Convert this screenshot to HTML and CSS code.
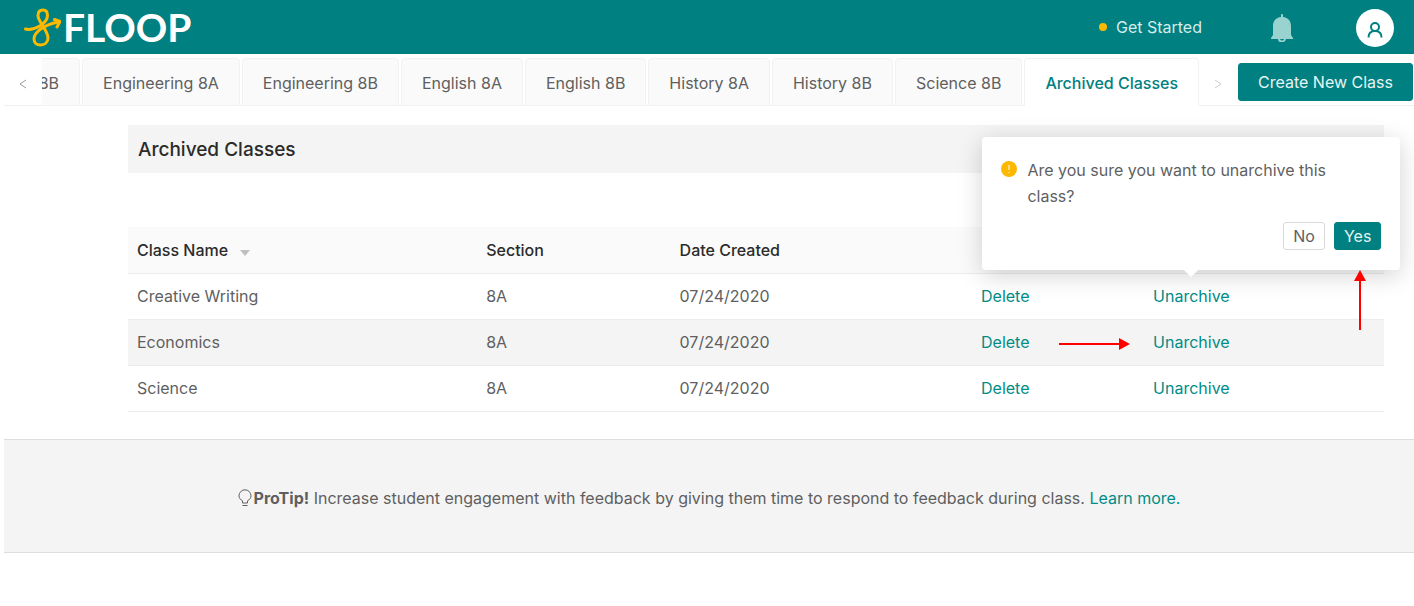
FILE: index.html
```
<!DOCTYPE html>
<html lang="en">
<head>
    <meta charset="UTF-8">
    <title>Floop - Archived Classes</title>
    <link rel="stylesheet" href="styles.css">
</head>
<body>
    <header class="header">
        <a class="logo" href="#">
            <svg class="logo-mark" viewBox="0 0 37 40" width="37" height="40" aria-hidden="true">
                <path d="M1.500 22C9 24 23.500 17 23.500 8.500C23.500 5 22 3 19 3C16 3 14 5 14 8.500C14 15 24 23 24 31C24 35 21 38 16.500 38C12.500 38 10 35.500 10 32C10 25 20 18 34 15" />
                <path d="M30.500 12.500L36 14.500L33 20" />
            </svg>
            <span class="logo-text">FLOOP</span>
        </a>
        <nav class="header-nav">
            <a class="get-started" href="#"><span class="dot"></span>Get Started</a>
            <button class="icon-button" type="button" aria-label="Notifications">
                <svg viewBox="0 0 22 28" width="22" height="28">
                    <path class="bell" d="M11 0C11.700 0 12 .5 12 1V3C17 3.500 20 7 20 12V21L22 24V25H0V24L2 21V12C2 7 5 3.500 10 3V1C10 .5 10.300 0 11 0Z" />
                    <path class="bell-clapper" d="M8 24.500a3 3 0 0 0 6 0" />
                </svg>
            </button>
            <button class="avatar" type="button" aria-label="Account">
                <svg viewBox="0 0 16 18" width="16" height="18">
                    <circle cx="8" cy="6" r="4" />
                    <path d="M1.500 16.500C1.500 12.500 4 10 8 10S14.500 12.500 14.500 16.500" />
                </svg>
            </button>
        </nav>
    </header>

    <div class="tab-bar">
        <button class="tab-arrow" type="button" aria-label="Previous tabs">
            <svg viewBox="0 0 8 10" width="8" height="10"><path d="M7 1L1 5L7 9" /></svg>
        </button>
        <nav class="tabs">
            <a class="tab" href="#">8B</a>
            <a class="tab" href="#">Engineering 8A</a>
            <a class="tab" href="#">Engineering 8B</a>
            <a class="tab" href="#">English 8A</a>
            <a class="tab" href="#">English 8B</a>
            <a class="tab" href="#">History 8A</a>
            <a class="tab" href="#">History 8B</a>
            <a class="tab" href="#">Science 8B</a>
            <a class="tab tab-active" href="#">Archived Classes</a>
        </nav>
        <button class="tab-arrow tab-arrow-disabled" type="button" aria-label="Next tabs">
            <svg viewBox="0 0 8 10" width="8" height="10"><path d="M1 1L7 5L1 9" /></svg>
        </button>
        <button class="button button-primary create-class" type="button">Create New Class</button>
    </div>

    <main class="content">
        <h1 class="title">Archived Classes</h1>

        <table class="classes">
            <thead>
                <tr>
                    <th class="col-name">Class Name
                        <svg class="sort" viewBox="0 0 10 6" width="10" height="6" aria-hidden="true"><path d="M0 0H10L5 6Z" /></svg>
                    </th>
                    <th class="col-section">Section</th>
                    <th class="col-date">Date Created</th>
                    <th class="col-delete"></th>
                    <th class="col-unarchive"></th>
                </tr>
            </thead>
            <tbody>
                <tr>
                    <td>Creative Writing</td>
                    <td>8A</td>
                    <td>07/24/2020</td>
                    <td><a href="#">Delete</a></td>
                    <td>
                        <div class="action">
                            <a href="#">Unarchive</a>
                            <div class="popover" role="dialog">
                                <div class="popover-message">
                                    <svg viewBox="0 0 16 16" width="16" height="16" aria-hidden="true">
                                        <circle class="warning" cx="8" cy="8" r="8" />
                                        <path class="warning-mark" d="M8 4V9M8 11V12" />
                                    </svg>
                                    <p>Are you sure you want to unarchive this class?</p>
                                </div>
                                <div class="popover-buttons">
                                    <button class="button button-small" type="button">No</button>
                                    <button class="button button-small button-primary" type="button">Yes</button>
                                </div>
                                <svg class="pointer pointer-up" viewBox="0 0 12 60" width="12" height="60" aria-hidden="true">
                                    <path class="pointer-line" d="M6 60V8" />
                                    <path class="pointer-head" d="M6 0L12 11H0Z" />
                                </svg>
                            </div>
                        </div>
                    </td>
                </tr>
                <tr class="row-hover">
                    <td>Economics</td>
                    <td>8A</td>
                    <td>07/24/2020</td>
                    <td><a href="#">Delete</a></td>
                    <td>
                        <div class="action">
                            <a href="#">Unarchive</a>
                            <svg class="pointer pointer-right" viewBox="0 0 71 12" width="71" height="12" aria-hidden="true">
                                <path class="pointer-line" d="M0 6H62" />
                                <path class="pointer-head" d="M71 6L60 12V0Z" />
                            </svg>
                        </div>
                    </td>
                </tr>
                <tr>
                    <td>Science</td>
                    <td>8A</td>
                    <td>07/24/2020</td>
                    <td><a href="#">Delete</a></td>
                    <td><a href="#">Unarchive</a></td>
                </tr>
            </tbody>
        </table>
    </main>

    <footer class="tip">
        <svg class="bulb" viewBox="0 0 14 18" width="14" height="18" aria-hidden="true">
            <path d="M4.500 14V11.800C2.500 10.800 1 9 1 6.800A6 6 0 0 1 13 6.800C13 9 11.500 10.800 9.500 11.800V14ZM4.500 16.500H9.500" />
        </svg>
        <p><strong>ProTip!</strong> Increase student engagement with feedback by giving them time to respond to feedback during class. <a href="#">Learn more.</a></p>
    </footer>
</body>
</html>
```
FILE: styles.css
```
* {
    box-sizing: border-box;
}

body {
    margin: 0;
    background-color: #fff;
    color: #5f5f5f;
    font-family: Inter, "Liberation Sans", sans-serif;
    font-size: 16px;
    line-height: 26px;
}

a {
    color: #008c87;
    text-decoration: none;
}

p {
    margin: 0;
}

button {
    font: inherit;
    cursor: pointer;
}

svg {
    flex: none;
}

/* Header */
.header {
    display: flex;
    align-items: center;
    justify-content: space-between;
    height: 54px;
    padding: 0 20px 0 24px;
    background-color: #008080;
}

.logo {
    display: flex;
    align-items: center;
    gap: 2px;
    color: #fff;
}

.logo-mark {
    fill: none;
    stroke: #fdb900;
    stroke-width: 3;
    stroke-linecap: round;
    stroke-linejoin: round;
}

.logo-text {
    font-family: Lato, sans-serif;
    font-size: 39px;
    font-weight: 700;
    line-height: 54px;
}

.header-nav {
    display: flex;
    align-items: center;
    gap: 63px;
}

.get-started {
    display: flex;
    align-items: center;
    gap: 9px;
    margin-right: 6px;
    color: #d5ecec;
}

.dot {
    width: 8px;
    height: 8px;
    border-radius: 50%;
    background-color: #fdb900;
}

.icon-button {
    display: flex;
    padding: 2px 0 0;
    border: none;
    background: none;
}

.bell {
    fill: #99d3d0;
}

.bell-clapper {
    fill: none;
    stroke: #99d3d0;
    stroke-width: 2;
}

.avatar {
    display: flex;
    align-items: center;
    justify-content: center;
    width: 38px;
    height: 38px;
    margin-top: 2px;
    padding: 4px 0 0;
    border: none;
    border-radius: 50%;
    background-color: #fff;
}

.avatar svg {
    fill: none;
    stroke: #008080;
    stroke-width: 2;
}

/* Tabs */
.tab-bar {
    display: flex;
    align-items: center;
    height: 52px;
    margin-left: 4px;
    padding-top: 4px;
    border-bottom: 1px solid #f0f0f0;
}

.tab-arrow {
    display: flex;
    flex: none;
    align-items: center;
    justify-content: center;
    width: 38px;
    height: 38px;
    padding: 4px 0 0;
    border: none;
    background: none;
}

.tab-arrow svg {
    fill: none;
    stroke: #999;
}

.tab-arrow-disabled svg {
    stroke: #ccc;
}

.tabs {
    display: flex;
    flex: 1;
    align-self: stretch;
    justify-content: flex-end;
    gap: 2px;
    margin-bottom: -1px;
    overflow: hidden;
}

.tab {
    flex: none;
    padding: 11px 20px;
    border: 1px solid #f2f2f2;
    border-radius: 4px 4px 0 0;
    background-color: #fafafa;
    color: #5f5f5f;
}

.tab-active {
    border-bottom-color: #fff;
    background-color: #fff;
    color: #008080;
    font-weight: 500;
}

.button {
    border: 1px solid #d9d9d9;
    border-radius: 3px;
    background-color: #fff;
    color: #5f5f5f;
}

.button-primary {
    border-color: #008080;
    background-color: #008080;
    color: #e6f4f4;
}

.create-class {
    flex: none;
    height: 38px;
    margin: 0 1px;
    padding: 0 19px;
}

/* Archived classes */
.content {
    margin: 19px 30px 27px 128px;
}

.title {
    margin: 0 0 54px;
    padding: 12px 10px 10px;
    background-color: #f4f4f4;
    color: #2b2b2b;
    font-size: 19px;
    font-weight: 500;
}

.classes {
    width: 100%;
    border-collapse: collapse;
    table-layout: fixed;
}

.classes th,
.classes td {
    height: 46px;
    padding: 0 9px;
    border-bottom: 1px solid #ececec;
    text-align: left;
}

.classes th {
    background-color: #fafafa;
    color: #2b2b2b;
    font-weight: 500;
}

.col-name {
    width: 27.8%;
}

.col-section {
    width: 15.4%;
}

.col-date {
    width: 24%;
}

.col-delete {
    width: 13.7%;
}

.sort {
    margin-left: 8px;
    fill: #bfbfbf;
}

.row-hover {
    background-color: #f4f4f4;
}

.action {
    display: inline-block;
    position: relative;
}

/* Confirmation */
.popover {
    position: absolute;
    bottom: calc(100% + 13px);
    left: 50%;
    z-index: 10;
    width: 418px;
    padding: 20px 19px;
    border-radius: 4px;
    background-color: #fff;
    box-shadow: 0 5px 24px rgba(0, 0, 0, 0.18);
    transform: translateX(-50%);
}

.popover::after {
    content: "";
    position: absolute;
    bottom: -5px;
    left: 50%;
    width: 10px;
    height: 10px;
    margin-left: -5px;
    background-color: #fff;
    transform: rotate(45deg);
}

.popover-message {
    display: flex;
    gap: 10px;
    padding-right: 40px;
}

.popover-message svg {
    margin-top: 4px;
}

.warning {
    fill: #fdb900;
}

.warning-mark {
    stroke: #fff;
}

.popover-buttons {
    display: flex;
    justify-content: flex-end;
    gap: 9px;
    margin-top: 13px;
}

.button-small {
    height: 28px;
    padding: 0 9px;
    line-height: 26px;
}

.pointer {
    position: absolute;
    fill: none;
}

.pointer-up {
    top: 100%;
    right: 34px;
    z-index: 1;
}

.pointer-right {
    top: 9px;
    right: calc(100% + 23px);
}

.pointer-line {
    stroke: #f00;
    stroke-width: 2;
}

.pointer-head {
    fill: #f00;
}

/* Tip */
.tip {
    display: flex;
    align-items: center;
    justify-content: center;
    gap: 2px;
    margin-left: 4px;
    padding: 45px 20px 41px;
    border-top: 1px solid #dedede;
    border-bottom: 1px solid #dedede;
    background-color: #f4f4f4;
}

.bulb {
    fill: none;
    stroke: #5f5f5f;
}
```
